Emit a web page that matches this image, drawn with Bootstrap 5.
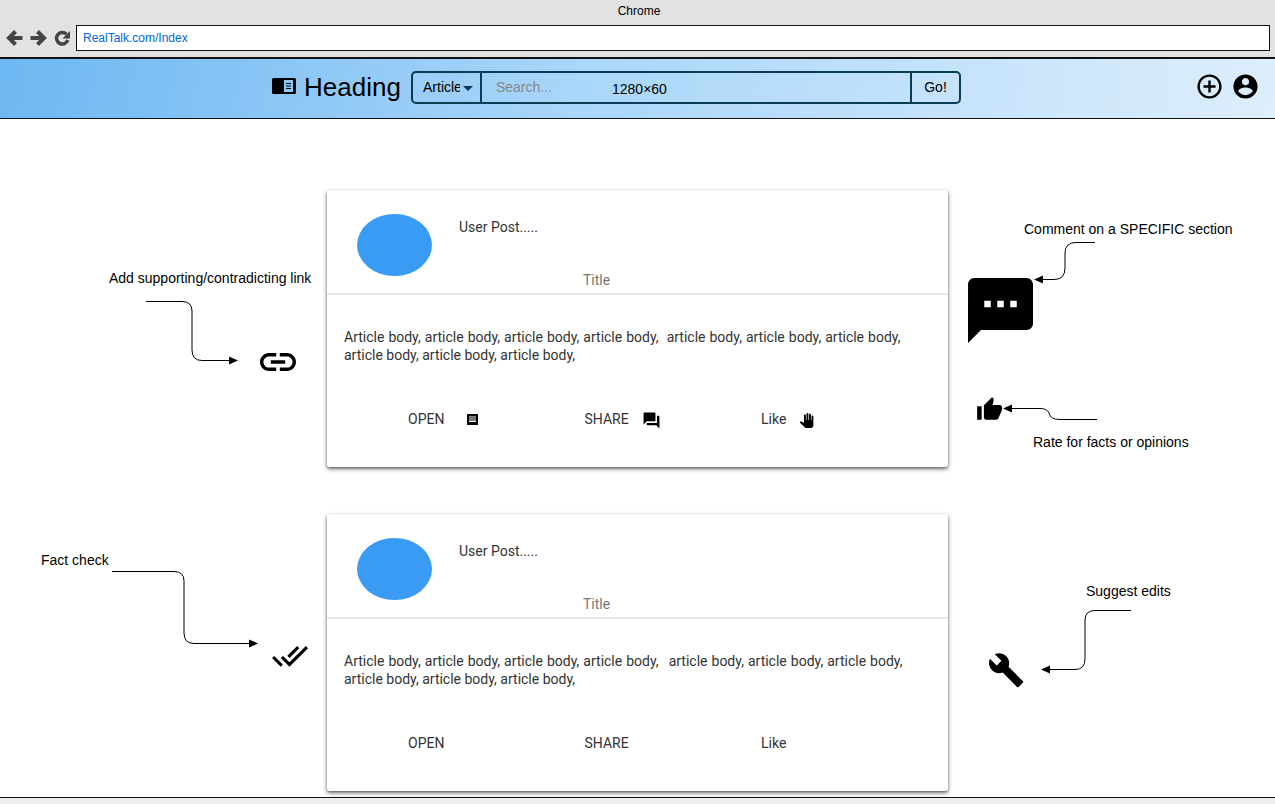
<!DOCTYPE html>
<html lang="en">
<head>
    <meta charset="UTF-8">
    <meta name="viewport" content="width=device-width, initial-scale=1.0">
    <title>RealTalk - Index</title>
    <link href="https://cdn.jsdelivr.net/npm/bootstrap@5.3.0/dist/css/bootstrap.min.css" rel="stylesheet">
    <style>
        html, body {
            height: 100%;
            overflow: hidden;
        }
        body {
            background: #fff;
            font-family: "Liberation Sans", Arial, sans-serif;
            color: #000;
        }
        .page-frame {
            width: 1275px;
            height: 804px;
            overflow: hidden;
        }
        .chrome-bar {
            height: 57px;
            background: #e2e2e2;
        }
        .chrome-title {
            height: 25px;
            line-height: 22px;
            font-size: 12px;
            padding-left: 3px;
        }
        .chrome-row {
            height: 26px;
            padding: 0 5px 0 6px;
        }
        .chrome-nav {
            width: 70px;
        }
        .address-box {
            height: 26px;
            line-height: 25px;
            padding-left: 6px;
            font-size: 12px;
            color: #0066dd;
            background: #fff;
            border: 1px solid #111;
        }
        .app-bar {
            height: 62px;
            padding: 12px 15px 0 272px;
            background: linear-gradient(100deg, #6db7f2 0%, #a9d6f9 45%, #deeefc 100%);
            border-top: 2px solid #111;
            border-bottom: 1px solid #111;
        }
        .app-logo {
            margin-top: 7px;
        }
        .app-title {
            margin: -1px 0 0 8px;
            width: 107px;
            font-size: 26px;
            line-height: 34px;
        }
        .app-icons {
            gap: 7px;
            margin-top: 1px;
        }
        .search-group {
            position: relative;
            width: 550px;
            height: 33px;
            border: 2px solid #0a3d55;
            border-radius: 5px;
            font-size: 14px;
        }
        .search-type {
            width: 69px;
            padding-left: 10px;
            border-right: 2px solid #0a3d55;
        }
        .search-type span {
            display: block;
            width: 37px;
            overflow: hidden;
        }
        .search-caret {
            margin: 2px 0 0 3px;
            border-top: 5px solid #0a3d55;
            border-left: 5px solid transparent;
            border-right: 5px solid transparent;
        }
        .search-input {
            padding-left: 14px;
            color: #888;
            border-right: 2px solid #0a3d55;
        }
        .search-go {
            width: 47px;
        }
        .size-label {
            position: absolute;
            left: 199px;
            top: 8px;
            font-size: 14px;
            line-height: 16px;
        }
        .post-area {
            height: 678px;
            padding: 71px 0 0 327px;
        }
        .post-card {
            width: 621px;
            height: 277px;
            margin-bottom: 47px;
            border: 0;
            border-radius: 2px;
            box-shadow: 0 1px 2px rgba(0, 0, 0, .25), 0 2px 4px rgba(0, 0, 0, .55);
            font-family: Roboto, "Liberation Sans", sans-serif;
            font-size: 14px;
            line-height: 18px;
            color: #333;
        }
        .post-head {
            position: relative;
            height: 105px;
            padding: 24px 0 0 30px;
            border-bottom: 2px solid #e6e6e6;
        }
        .post-avatar {
            width: 75px;
            height: 62px;
            border-radius: 50%;
            background: #3a9bf4;
        }
        .post-user {
            margin: 4px 0 0 27px;
        }
        .post-title {
            position: absolute;
            left: 256px;
            top: 81px;
            color: #777;
        }
        .post-text {
            padding: 33px 20px 0 17px;
            height: 112px;
        }
        .text-line {
            display: block;
            white-space: pre;
        }
        .line-spread {
            word-spacing: .55px;
        }
        .line-gap {
            margin-left: 2px;
        }
        .post-actions {
            padding-left: 81px;
        }
        .post-action {
            width: 176.5px;
            height: 24px;
        }
        .action-open { gap: 23px; }
        .action-share { gap: 13px; }
        .action-like { gap: 13px; }
        .action-icon {
            margin-top: 2px;
        }
        .footer-strip {
            height: 7px;
            background: #eee;
            border-top: 1px solid #111;
        }
        .canvas-layer {
            position: absolute;
            left: 0;
            top: 0;
            pointer-events: none;
        }
        .note-label {
            position: absolute;
            font-size: 14px;
            line-height: 16px;
            white-space: nowrap;
        }
        .note-link { left: 109px; top: 270px; }
        .note-comment { left: 1024px; top: 221px; }
        .note-rate { left: 1033px; top: 434px; }
        .note-fact { left: 41px; top: 552px; }
        .note-edit { left: 1086px; top: 583px; }
    </style>
</head>
<body>
    <div class="page-frame position-relative">
        <div class="chrome-bar">
            <div class="chrome-title text-center">Chrome</div>
            <div class="chrome-row d-flex align-items-center">
                <svg class="chrome-nav flex-shrink-0" width="70" height="20" viewBox="0 0 70 20">
                    <g fill="none" stroke="#444" stroke-width="4">
                        <path d="M16.500 10H3M9.500 3.500L3 10l6.500 6.500"/>
                        <path d="M24.500 10H38M31.500 3.500L38 10l-6.500 6.500"/>
                        <path d="M60.500 6.200A5.800 5.800 0 1 0 61.800 12" stroke-width="3.500"/>
                    </g>
                    <polygon points="64,3 64,10.500 56.500,10.500" fill="#444"/>
                </svg>
                <div class="address-box flex-grow-1">RealTalk.com/Index</div>
            </div>
        </div>

        <nav class="app-bar d-flex align-items-start">
            <svg class="app-logo" width="24" height="16" viewBox="0 0 24 16">
                <path fill-rule="evenodd" d="M1.500 0h21a1.500 1.500 0 0 1 1.500 1.500v13a1.500 1.500 0 0 1-1.500 1.500h-21a1.500 1.500 0 0 1-1.500-1.500v-13a1.500 1.500 0 0 1 1.500-1.500zM12 2v12h9V2zM14 5h5v1h-5zM14 7.500h5v1h-5zM14 10h5v1h-5z"/>
            </svg>
            <div class="app-title">Heading</div>
            <div class="search-group d-flex align-items-stretch">
                <div class="search-type d-flex align-items-center">
                    <span>Article</span>
                    <i class="search-caret"></i>
                </div>
                <div class="search-input flex-grow-1 d-flex align-items-center">Search...</div>
                <div class="search-go d-flex align-items-center justify-content-center">Go!</div>
                <div class="size-label">1280×60</div>
            </div>
            <div class="ms-auto d-flex app-icons">
                <svg width="29" height="29" viewBox="0 0 24 24"><path d="M13 7h-2v4H7v2h4v4h2v-4h4v-2h-4V7zm-1-5C6.480 2 2 6.480 2 12s4.480 10 10 10 10-4.480 10-10S17.520 2 12 2zm0 18c-4.410 0-8-3.590-8-8s3.590-8 8-8 8 3.590 8 8-3.590 8-8 8z"/></svg>
                <svg width="29" height="29" viewBox="0 0 24 24"><path d="M12 2C6.480 2 2 6.480 2 12s4.480 10 10 10 10-4.480 10-10S17.520 2 12 2zm0 3c1.660 0 3 1.340 3 3s-1.340 3-3 3-3-1.340-3-3 1.340-3 3-3zm0 14.200c-2.500 0-4.710-1.280-6-3.220.030-1.990 4-3.080 6-3.080 1.990 0 5.970 1.090 6 3.080-1.290 1.940-3.500 3.220-6 3.220z"/></svg>
            </div>
        </nav>

        <main class="post-area">
            <div class="card post-card">
                <div class="post-head d-flex align-items-start">
                    <div class="post-avatar"></div>
                    <div class="post-user">User Post.....</div>
                    <div class="post-title">Title</div>
                </div>
                <div class="post-text">
                    <span class="text-line line-spread">Article body, article body, article body, article body,  article body, article body, article body,</span>
                    <span class="text-line">article body, article body, article body,</span>
                </div>
                <div class="post-actions d-flex">
                    <div class="post-action action-open d-flex align-items-center">
                        <span>OPEN</span>
                        <svg class="flex-shrink-0" width="11" height="11" viewBox="0 0 11 11">
                            <rect width="11" height="11"/>
                            <rect x="2" y="2.500" width="7" height="1" fill="#fff"/>
                            <rect x="2" y="3.500" width="7" height="3.500" fill="#777"/>
                            <rect x="2" y="7" width="7" height="1" fill="#fff"/>
                        </svg>
                    </div>
                    <div class="post-action action-share d-flex align-items-center">
                        <span>SHARE</span>
                        <svg class="action-icon" width="19" height="19" viewBox="0 0 24 24"><path d="M21 6h-2v9H6v2c0 .55.45 1 1 1h11l4 4V7c0-.55-.45-1-1-1zm-4 6V3c0-.55-.45-1-1-1H3c-.55 0-1 .45-1 1v14l4-4h10c.55 0 1-.45 1-1z"/></svg>
                    </div>
                    <div class="post-action action-like d-flex align-items-center">
                        <span>Like</span>
                        <svg class="action-icon" width="15" height="15" viewBox="0 0 24 24"><path d="M23 5.500V20c0 2.200-1.800 4-4 4h-7.300c-1.080 0-2.100-.43-2.850-1.190L1 14.830s1.260-1.230 1.300-1.250c.22-.19.49-.29.79-.29.22 0 .42.06.6.16.04.01 4.310 2.460 4.310 2.460V4c0-.83.67-1.500 1.500-1.500S11 3.170 11 4v7h1V1.500c0-.83.67-1.500 1.500-1.500S15 .67 15 1.500V11h1V2.500c0-.83.67-1.500 1.500-1.500s1.500.67 1.500 1.500V11h1V5.500c0-.83.67-1.500 1.500-1.500s1.500.67 1.500 1.500z"/></svg>
                    </div>
                </div>
            </div>

            <div class="card post-card">
                <div class="post-head d-flex align-items-start">
                    <div class="post-avatar"></div>
                    <div class="post-user">User Post.....</div>
                    <div class="post-title">Title</div>
                </div>
                <div class="post-text">
                    <span class="text-line line-spread">Article body, article body, article body, article body,  <span class="line-gap">article body, article body, article body,</span></span>
                    <span class="text-line">article body, article body, article body,</span>
                </div>
                <div class="post-actions d-flex">
                    <div class="post-action d-flex align-items-center"><span>OPEN</span></div>
                    <div class="post-action d-flex align-items-center"><span>SHARE</span></div>
                    <div class="post-action d-flex align-items-center"><span>Like</span></div>
                </div>
            </div>
        </main>

        <div class="footer-strip"></div>

        <!-- notes around the cards, free canvas in page coordinates -->
        <svg class="canvas-layer" width="1275" height="804" viewBox="0 0 1275 804">
            <g fill="none" stroke="#000" stroke-width="1">
                <path d="M146 301.500H182Q192 301.500 192 311V350Q192 360.500 202 360.500H230"/>
                <path d="M1095 242.500H1076Q1065 242.500 1065 253V268Q1065 279.500 1054 279.500H1042"/>
                <path d="M1097 419.500H1060Q1050 419.500 1049 413Q1047 408.500 1040 408.500H1011"/>
                <path d="M112 571.500H174Q184 571.500 184 581V633Q184 643.500 194 643.500H250"/>
                <path d="M1131 610.500H1095Q1085 610.500 1085 620V659Q1085 669.500 1075 669.500H1049"/>
            </g>
            <polygon points="238,360.500 229,356.500 229,364.500"/>
            <polygon points="1034,279.500 1043,275.500 1043,283.500"/>
            <polygon points="1003,408.500 1012,404.500 1012,412.500"/>
            <polygon points="258,643.500 249,639.500 249,647.500"/>
            <polygon points="1041,669.500 1050,665.500 1050,673.500"/>
            <path transform="translate(256.400 340.400) scale(1.800)" d="M3.900 12c0-1.710 1.390-3.100 3.100-3.100h4V7H7c-2.760 0-5 2.240-5 5s2.240 5 5 5h4v-1.900H7c-1.710 0-3.100-1.390-3.100-3.100zM8 13h8v-2H8v2zm9-6h-4v1.900h4c1.710 0 3.100 1.390 3.100 3.100s-1.390 3.100-3.100 3.100h-4V17h4c2.760 0 5-2.240 5-5s-2.240-5-5-5z"/>
            <path transform="translate(961.500 271.500) scale(3.250)" d="M20 2H4c-1.100 0-1.990.9-1.990 2L2 22l4-4h14c1.100 0 2-.9 2-2V4c0-1.100-.9-2-2-2zM9 11H7V9h2v2zm4 0h-2V9h2v2zm4 0h-2V9h2v2z"/>
            <path transform="translate(976 396) scale(1.130)" d="M1 21h4V9H1v12zm22-11c0-1.100-.9-2-2-2h-6.310l.95-4.570.03-.32c0-.41-.17-.79-.44-1.060L14.170 1 7.590 7.590C7.220 7.950 7 8.450 7 9v10c0 1.100.9 2 2 2h9c.83 0 1.540-.5 1.840-1.220l3.020-7.050c.09-.23.14-.47.14-.73v-2z"/>
            <path transform="translate(271.400 637.300) scale(1.550)" d="M18 7l-1.410-1.410-6.340 6.340 1.410 1.410L18 7zm4.240-1.410L11.660 16.170 7.480 12l-1.410 1.410L11.660 19l12-12-1.420-1.410zM.41 13.410L6 19l1.410-1.410L1.830 12 .41 13.410z"/>
            <path transform="translate(987.500 651.500) scale(1.550)" d="M22.700 19l-9.100-9.100c.9-2.300.4-5-1.500-6.900-2-2-5-2.400-7.400-1.300L9 6 6 9 1.600 4.700C.4 7.100.9 10.100 2.900 12.100c1.900 1.900 4.600 2.400 6.900 1.500l9.100 9.100c.4.4 1 .4 1.400 0l2.300-2.300c.5-.4.5-1.100.1-1.400z"/>
        </svg>
        <div class="note-label note-link">Add supporting/contradicting link</div>
        <div class="note-label note-comment">Comment on a SPECIFIC section</div>
        <div class="note-label note-rate">Rate for facts or opinions</div>
        <div class="note-label note-fact">Fact check</div>
        <div class="note-label note-edit">Suggest edits</div>
    </div>

    <script src="https://cdn.jsdelivr.net/npm/bootstrap@5.3.0/dist/js/bootstrap.bundle.min.js"></script>
</body>
</html>
